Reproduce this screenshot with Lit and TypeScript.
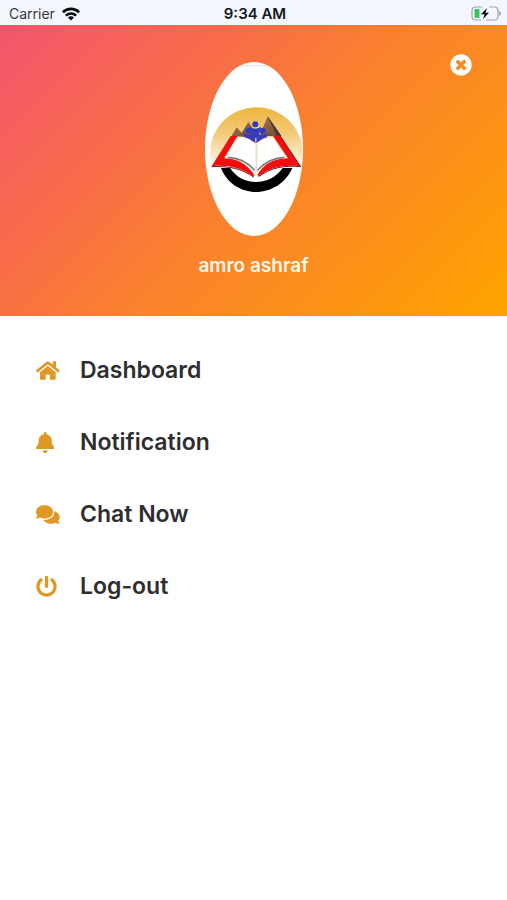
import { LitElement, html, css, svg } from "lit";
import { customElement } from "lit/decorators.js";

interface MenuItem {
  label: string;
  href: string;
  viewBox: string;
  path: string;
}

const ITEMS: MenuItem[] = [
  {
    label: "Dashboard",
    href: "#dashboard",
    viewBox: "0 0 576 512",
    path: "M280.37 148.26L96 300.11V464a16 16 0 0 0 16 16l112.06-.29a16 16 0 0 0 15.92-16V368a16 16 0 0 1 16-16h64a16 16 0 0 1 16 16v95.64a16 16 0 0 0 16 16.05L464 480a16 16 0 0 0 16-16V300L295.67 148.26a12.19 12.19 0 0 0-15.3 0zM571.6 251.47L488 182.56V44.05a12 12 0 0 0-12-12h-56a12 12 0 0 0-12 12v72.61L318.47 43a48 48 0 0 0-61 0L4.34 251.47a12 12 0 0 0-1.6 16.9l25.5 31A12 12 0 0 0 45.15 301l235.22-193.74a12.19 12.19 0 0 1 15.3 0L530.9 301a12 12 0 0 0 16.9-1.6l25.5-31a12 12 0 0 0-1.7-16.93z",
  },
  {
    label: "Notification",
    href: "#notification",
    viewBox: "0 0 448 512",
    path: "M224 512c35.32 0 63.97-28.65 63.97-64H160.03c0 35.35 28.65 64 63.97 64zm215.39-149.71c-19.32-20.76-55.47-51.99-55.47-154.29 0-77.7-54.48-139.9-127.94-155.16V32c0-17.67-14.32-32-31.98-32s-31.98 14.33-31.98 32v20.84C118.56 68.1 64.08 130.3 64.08 208c0 102.3-36.15 133.53-55.47 154.29-6 6.45-8.66 14.16-8.61 21.71.11 16.4 12.98 32 32.1 32h383.8c19.12 0 32-15.6 32.1-32 .05-7.55-2.61-15.27-8.61-21.71z",
  },
  {
    label: "Chat Now",
    href: "#chat",
    viewBox: "0 0 576 512",
    path: "M416 192c0-88.4-93.1-160-208-160S0 103.6 0 192c0 34.3 14.1 65.9 38 92-13.4 30.2-35.5 54.2-35.8 54.5-2.2 2.3-2.8 5.7-1.5 8.7S4.8 352 8 352c36.6 0 66.9-12.3 88.7-25 32.2 15.7 70.3 25 111.3 25 114.9 0 208-71.6 208-160zm122 220c23.9-26 38-57.7 38-92 0-66.9-53.5-124.2-129.3-148.1.9 6.6 1.3 13.3 1.3 20.1 0 105.9-107.7 192-240 192-10.8 0-21.3-.8-31.7-1.9C207.8 439.6 281.8 480 368 480c41 0 79.1-9.2 111.3-25 21.8 12.7 52.1 25 88.7 25 3.2 0 6.1-1.9 7.3-4.8 1.3-2.9.7-6.3-1.5-8.7-.3-.3-22.4-24.2-35.8-54.5z",
  },
  {
    label: "Log-out",
    href: "#logout",
    viewBox: "0 0 512 512",
    path: "M400 54.1c63 45 104 118.6 104 201.9 0 136.8-110.8 247.7-247.5 248C120 504.3 8.2 393 8 256.4 7.9 173.1 48.9 99.3 111.8 54.2c11.7-8.3 28-4.8 35 7.7L162.6 90c5.9 10.5 3.1 23.8-6.6 31-41.5 30.8-68 79.6-68 134.9-.1 92.3 74.5 168.1 168 168.1 91.6 0 168.6-74.2 168-169.1-.3-51.8-24.7-101.8-68.1-134-9.7-7.2-12.4-20.5-6.5-30.9l15.8-28.1c7-12.4 23.2-16.1 34.8-7.8zM296 264V24c0-13.3-10.7-24-24-24h-32c-13.3 0-24 10.7-24 24v240c0 13.3 10.7 24 24 24h32c13.3 0 24-10.7 24-24z",
  },
];

@customElement("status-bar")
export class StatusBar extends LitElement {
  static styles = css`
    :host {
      display: grid;
      grid-template-columns: 1fr auto 1fr;
      align-items: center;
      height: 25px;
      padding: 2px 6px 0 9px;
      box-sizing: border-box;
      background: #f3f6fd;
      color: #15171c;
      font: 400 14px/20px Inter, sans-serif;
    }
    .carrier {
      display: flex;
      align-items: center;
      gap: 7px;
      color: #33363b;
    }
    .wifi {
      width: 18px;
      height: 14px;
    }
    .time {
      font-size: 15px;
      font-weight: 600;
    }
    .battery {
      justify-self: end;
      width: 30px;
      height: 15px;
    }
  `;

  render() {
    return html`
      <div class="carrier">
        <span>Carrier</span>
        <svg class="wifi" viewBox="0 0 18 14" aria-hidden="true">
          <g fill="none" stroke="#08090c" stroke-width="2.6">
            <path d="M.9 5.2a11.6 11.6 0 0 1 16.2 0" />
            <path d="M3.9 8.6a7.3 7.3 0 0 1 10.2 0" />
          </g>
          <path d="M9 13.6l-3-3a4.3 4.3 0 0 1 6 0z" fill="#08090c" />
        </svg>
      </div>
      <span class="time">9:34 AM</span>
      <svg class="battery" viewBox="0 0 30 15" aria-hidden="true">
        <path
          d="M11.500 1H4.500a3.500 3.500 0 0 0-3.500 3.500v6a3.500 3.500 0 0 0 3.500 3.500H10M18 1h5.500a3.500 3.500 0 0 1 3.500 3.500v6a3.500 3.500 0 0 1-3.500 3.500H15"
          fill="none"
          stroke="#a3a6ab"
          stroke-width="1.200"
        />
        <path d="M28 5v5q2-.8 2-2.500T28 5z" fill="#a3a6ab" />
        <rect x="3.500" y="3" width="5" height="9" rx="1" fill="#34c759" />
        <path d="M16 2L10 8.200h3.600l-1.600 4.800 6-6.200h-3.600z" fill="#08090c" />
      </svg>
    `;
  }
}

const logo = svg`
  <defs>
    <linearGradient id="sun" x1="0" y1="0" x2="0" y2="1">
      <stop offset="0" stop-color="#eeb53c" />
      <stop offset="0.5" stop-color="#f3cc7c" />
      <stop offset="1" stop-color="#fff3dc" />
    </linearGradient>
    <linearGradient id="rock" x1="0" y1="0" x2="1" y2="1">
      <stop offset="0" stop-color="#a87850" />
      <stop offset="1" stop-color="#6b4733" />
    </linearGradient>
    <clipPath id="oval"><ellipse cx="177" cy="282" rx="147" ry="261" /></clipPath>
  </defs>
  <g clip-path="url(#oval)">
    <rect x="30" y="21" width="294" height="522" fill="#fff" />
    <path d="M140 32h78" stroke="#ececec" stroke-width="5" />
    <path d="M46 320V292a138 135 0 0 1 276 0v28z" fill="url(#sun)" />
    <path d="M108 245l17-28 15 16 20-32 30 44z" fill="url(#rock)" />
    <path d="M193 243l25-59 40 59z" fill="url(#rock)" />
    <path d="M218 184l42 60h-14z" fill="#4c362c" />
    <path d="M78 339C95 384 138 411 183 411s90-27 109-72h-29c-20 27-47 42-80 42s-59-15-78-42z" fill="#000" />
    <path d="M70 333c45-4 80 4 113 34 34-30 72-38 116-34q-50 0-116 44-66-44-113-44z" fill="#fff" />
    <path d="M50 335c48-2 90 4 127 32" fill="none" stroke="#5d1614" stroke-width="3" />
    <path d="M107 243h22L88 310c36 0 66 14 91 51l-5 3c-36-27-78-35-124-30z" fill="#f30d0d" />
    <path d="M234 243h22l60 91c-50-5-91 3-125 30l-4-4c22-36 50-50 92-50z" fill="#f30d0d" />
    <path d="M256 244l61 91c-50-5-92 4-126 30" fill="none" stroke="#791512" stroke-width="3" />
    <path d="M127 246l-37 62c36 1 68 15 93 44 24-28 56-42 91-44l-40-62c-20 0-36 7-51 22-15-15-34-22-56-22z" fill="#fff" stroke="#f8dfbd" stroke-width="3" />
    <path d="M99 307c34 2 60 14 80 39M268 307c-34 2-60 14-80 39" fill="none" stroke="#777b7c" stroke-width="5" />
    <path d="M184 263v91" stroke="#efd9bd" stroke-width="5" />
    <g fill="#353bbf">
      <circle cx="181" cy="208" r="9" />
      <circle cx="160" cy="227" r="9" />
      <circle cx="203" cy="227" r="9" />
      <path d="M164 215q17 12 34 0l-8 34h-18z" />
      <path d="M143 235q18 8 37 3l1 26q-14-13-32-17z" />
      <path d="M220 235q-18 8-35 3l-1 26q14-13 31-17z" />
    </g>
  </g>
`;

@customElement("profile-header")
export class ProfileHeader extends LitElement {
  static styles = css`
    :host {
      display: flex;
      flex-direction: column;
      align-items: center;
      position: relative;
      padding: 37px 0 36px;
      background: linear-gradient(135deg, #f3546f 0%, #f97142 36%, #fa8030 50%, #fb8a21 65%, #ffa200 98%);
    }
    .avatar {
      width: 98px;
      height: 174px;
    }
    .name {
      margin: 16px 0 0;
      color: #fff8ee;
      font: 600 19px/28px Inter, sans-serif;
    }
    .close {
      position: absolute;
      top: 29px;
      right: 35px;
      display: flex;
      padding: 0;
      border: 0;
      background: none;
      color: #fff;
      cursor: pointer;
    }
    .close-icon {
      width: 22px;
      height: 22px;
      fill: currentColor;
    }
  `;

  render() {
    return html`
      <svg class="avatar" viewBox="30 21 294 522" role="img" aria-label="Profile picture">${logo}</svg>
      <h1 class="name">amro ashraf</h1>
      <button class="close" type="button" aria-label="Close menu">
        <svg class="close-icon" viewBox="0 0 512 512" aria-hidden="true">
          <path
            d="M256 8C119 8 8 119 8 256s111 248 248 248 248-111 248-248S393 8 256 8zm121.6 313.1c4.7 4.7 4.7 12.3 0 17L338 377.6c-4.7 4.7-12.3 4.7-17 0L256 312l-65.1 65.6c-4.7 4.7-12.3 4.7-17 0L134.4 338c-4.7-4.7-4.7-12.3 0-17l65.6-65-65.6-65.1c-4.7-4.7-4.7-12.3 0-17l39.6-39.6c4.7-4.7 12.3-4.7 17 0l65 65.7 65.1-65.6c4.7-4.7 12.3-4.7 17 0l39.6 39.6c4.7 4.7 4.7 12.3 0 17L312 256l65.6 65.1z"
          />
        </svg>
      </button>
    `;
  }
}

@customElement("app-root")
export class AppRoot extends LitElement {
  static styles = css`
    :host {
      display: block;
      min-height: 100vh;
      background: #fff;
    }
    .menu {
      display: flex;
      flex-direction: column;
      padding: 18px 36px;
    }
    .item {
      display: grid;
      grid-template-columns: 24px 1fr;
      column-gap: 20px;
      align-items: center;
      height: 72px;
      color: #2e2e30;
      font: 600 23px/32px Inter, sans-serif;
      text-decoration: none;
    }
    .icon {
      height: 21px;
      fill: #df9826;
    }
  `;

  render() {
    return html`
      <status-bar></status-bar>
      <profile-header></profile-header>
      <nav class="menu" aria-label="Main">
        ${ITEMS.map(
          (item) => html`
            <a class="item" href=${item.href}>
              <svg class="icon" viewBox=${item.viewBox} aria-hidden="true"><path d=${item.path} /></svg>
              <span>${item.label}</span>
            </a>
          `
        )}
      </nav>
    `;
  }
}
